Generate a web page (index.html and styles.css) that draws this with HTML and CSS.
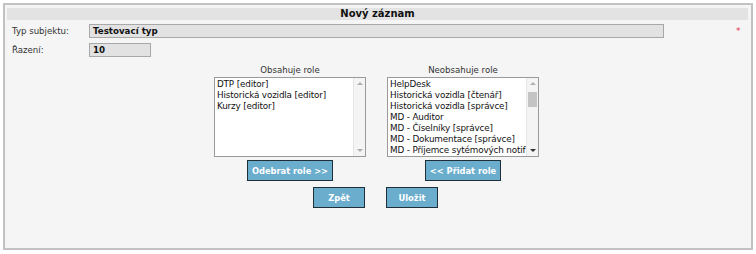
FILE: index.html
```html
<!DOCTYPE html>
<html>
<head>
  <title>Nový záznam</title>
  <link rel="stylesheet" href="styles.css">
</head>
<body>

  <div class="frame">
    <div class="frame-title">Nový záznam</div>

    <div class="form-row">
      <label class="form-label">Typ subjektu:</label>
      <div class="field field-wide">Testovací typ</div>
      <span class="required">*</span>
    </div>
    <div class="form-row">
      <label class="form-label">Řazení:</label>
      <div class="field field-short">10</div>
    </div>

    <div class="roles">
      <div class="role-col">
        <div class="role-caption">Obsahuje role</div>
        <div class="listbox">
          <div class="listbox-items">
            <div>DTP [editor]</div>
            <div>Historická vozidla [editor]</div>
            <div>Kurzy [editor]</div>
          </div>
          <div class="scrollbar">
            <span class="arrow up"></span>
            <span class="arrow down"></span>
          </div>
        </div>
        <button class="btn btn-role">Odebrat role &gt;&gt;</button>
      </div>

      <div class="role-col">
        <div class="role-caption">Neobsahuje role</div>
        <div class="listbox">
          <div class="listbox-items">
            <div>HelpDesk</div>
            <div>Historická vozidla [čtenář]</div>
            <div>Historická vozidla [správce]</div>
            <div>MD - Auditor</div>
            <div>MD - Číselníky [správce]</div>
            <div>MD - Dokumentace [správce]</div>
            <div>MD - Příjemce sytémových notif</div>
          </div>
          <div class="scrollbar">
            <span class="arrow up"></span>
            <span class="thumb"></span>
            <span class="arrow down dark"></span>
          </div>
        </div>
        <button class="btn btn-role">&lt;&lt; Přidat role</button>
      </div>
    </div>

    <div class="actions">
      <button class="btn btn-action">Zpět</button>
      <button class="btn btn-action">Uložit</button>
    </div>
  </div>

</body>
</html>
```

FILE: styles.css
```css
body {
  margin: 0;
  background-color: #ffffff;
  font-family: 'DejaVu Sans', Verdana, sans-serif;
  font-size: 8.6px;
  color: #222;
}

.frame {
  margin: 3px;
  height: 247px;
  box-sizing: border-box;
  border: 2px solid #c2c2c2;
  background-color: #f5f5f5;
  padding: 3px 3px 0 2px;
}

.frame-title {
  height: 12px;
  line-height: 12px;
  background-color: #e3e3e3;
  text-align: center;
  font-weight: bold;
  font-size: 10px;
  color: #111;
}

.form-row {
  display: flex;
  align-items: center;
  margin-top: 4px;
  padding-left: 5px;
}

.form-row + .form-row {
  margin-top: 5px;
}

.form-label {
  width: 77px;
  color: #333;
}

.field {
  box-sizing: border-box;
  height: 14px;
  line-height: 12px;
  padding-left: 3px;
  border: 1px solid #a8a8a8;
  background-color: #e2e2e2;
  font-weight: bold;
  font-size: 8.7px;
  color: #111;
}

.field-wide {
  width: 575px;
}

.field-short {
  width: 62px;
}

.required {
  margin-left: 72px;
  color: #e0344f;
  font-size: 9px;
}

.roles {
  display: flex;
  justify-content: center;
  gap: 21px;
  margin-top: 7px;
  padding-right: 2px;
}

.role-col {
  width: 152px;
  display: flex;
  flex-direction: column;
  align-items: center;
}

.role-caption {
  height: 12px;
  line-height: 12px;
  color: #333;
}

.listbox {
  display: flex;
  width: 152px;
  height: 80px;
  box-sizing: border-box;
  margin-top: 1px;
  border: 1px solid #9a9a9a;
  background-color: #ffffff;
}

.listbox-items {
  flex: 1;
  overflow: hidden;
  padding: 1px 0 0 2px;
  line-height: 11px;
  font-size: 8.8px;
  letter-spacing: -0.15px;
  white-space: nowrap;
  color: #111;
}

.scrollbar {
  position: relative;
  width: 11px;
  background-color: #f4f4f4;
  border-left: 1px solid #e6e6e6;
}

.arrow {
  position: absolute;
  left: 3px;
  width: 0;
  height: 0;
  border-left: 3px solid transparent;
  border-right: 3px solid transparent;
}

.arrow.up {
  top: 4px;
  border-bottom: 3px solid #b0b0b0;
}

.arrow.down {
  bottom: 4px;
  border-top: 3px solid #b0b0b0;
}

.arrow.down.dark {
  border-top-color: #333;
}

.thumb {
  position: absolute;
  top: 14px;
  left: 1px;
  width: 9px;
  height: 15px;
  background-color: #c4c4c4;
}

.btn {
  box-sizing: border-box;
  height: 21px;
  border: 1px solid #1f2f38;
  background-color: #6aadcd;
  color: #ffffff;
  font-family: 'DejaVu Sans', Verdana, sans-serif;
  font-weight: bold;
  font-size: 8.3px;
  cursor: pointer;
  padding: 0;
}

.btn-role {
  margin-top: 3px;
  width: 86px;
}

.role-col:last-child .btn-role {
  width: 76px;
}

.actions {
  display: flex;
  justify-content: center;
  gap: 21px;
  margin-top: 6px;
  padding-right: 4px;
}

.btn-action {
  width: 52px;
}
```
